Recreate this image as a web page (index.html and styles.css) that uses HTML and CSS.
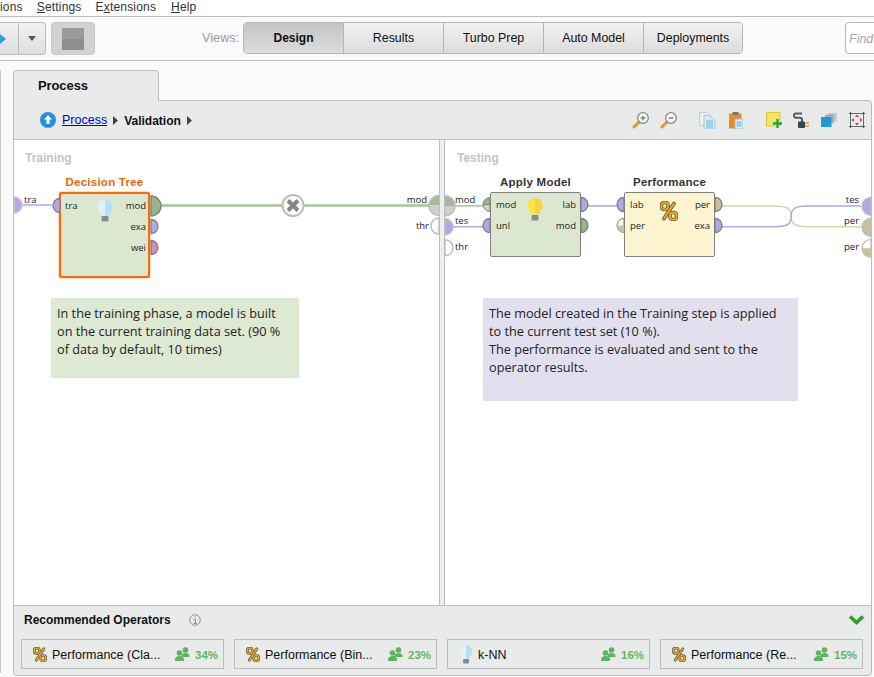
FILE: index.html
```html
<!DOCTYPE html>
<html lang="en">
<head>
<meta charset="utf-8">
<title>Process - Validation</title>
<link rel="stylesheet" href="styles.css">
</head>
<body>
<svg class="defs" width="0" height="0" aria-hidden="true">
  <defs>
    <symbol id="pct" viewBox="0 0 18 20">
      <path d="M14 2.500 4 17.500" fill="none" stroke="#5d5a4c" stroke-width="3.800" stroke-linecap="round"/>
      <rect x="1.500" y="1.500" width="6.500" height="7" rx="2.600" fill="none" stroke="#5d5a4c" stroke-width="3.600"/>
      <rect x="10" y="11.500" width="6.500" height="7" rx="2.600" fill="none" stroke="#5d5a4c" stroke-width="3.600"/>
      <path d="M14 2.500 4 17.500" fill="none" stroke="#f2a91c" stroke-width="2" stroke-linecap="round"/>
      <rect x="1.500" y="1.500" width="6.500" height="7" rx="2.600" fill="none" stroke="#f2a91c" stroke-width="1.800"/>
      <rect x="10" y="11.500" width="6.500" height="7" rx="2.600" fill="none" stroke="#f2a91c" stroke-width="1.800"/>
    </symbol>
    <symbol id="bulb-blue" viewBox="0 0 16 24">
      <path d="M8 1a7.500 7.500 0 0 0-7.500 7.500c0 3.500 2.800 5.500 3.500 9h4z" fill="#dff1fb"/>
      <path d="M8 1a7.500 7.500 0 0 1 7.500 7.500c0 3.500-2.800 5.500-3.500 9H8z" fill="#b5e0f6"/>
      <rect x="4.500" y="18" width="7" height="5.500" rx="1" fill="#78909c"/>
    </symbol>
    <symbol id="bulb-yellow" viewBox="0 0 16 24">
      <path d="M8 1a7.500 7.500 0 0 0-7.500 7.500c0 3.500 2.800 5.500 3.500 9h4z" fill="#fce34e"/>
      <path d="M8 1a7.500 7.500 0 0 1 7.500 7.500c0 3.500-2.800 5.500-3.500 9H8z" fill="#f8d33a"/>
      <rect x="4.500" y="18" width="7" height="5.500" rx="1" fill="#78909c"/>
    </symbol>
    <symbol id="people" viewBox="0 0 15 14">
      <circle cx="10.500" cy="3" r="2.800" fill="#5fb35f"/>
      <path d="M6.500 9c0-2 2-3 4-3s4 1 4 3v1h-8z" fill="#5fb35f"/>
      <circle cx="4.500" cy="6" r="2.800" fill="#5fb35f"/>
      <path d="M0 12.500c0-2 2-3.500 4.500-3.500S9 10.500 9 12.500V14H0z" fill="#5fb35f"/>
    </symbol>
    <symbol id="lens" viewBox="0 0 18 18">
      <path d="M7 11 2 16" stroke="#e8912d" stroke-width="3" stroke-linecap="round"/>
      <circle cx="11" cy="7" r="5.300" fill="#fff" stroke="#7c8a92" stroke-width="1.300"/>
    </symbol>
  </defs>
</svg>

<nav class="menubar">
  <span class="menu menu-cut">ions</span>
  <span class="menu"><u>S</u>ettings</span>
  <span class="menu">E<u>x</u>tensions</span>
  <span class="menu"><u>H</u>elp</span>
</nav>

<header class="toolbar">
  <div class="run-group">
    <span class="run-main"><svg class="run-arrow" width="8" height="12" viewBox="0 0 8 12"><path d="M0 1h1l6 5-6 5H0z" fill="#2c9fdc"/></svg></span>
    <span class="run-drop"><svg width="8" height="5" viewBox="0 0 8 5"><path d="M0 0h8L4 5z" fill="#555"/></svg></span>
  </div>
  <div class="stop-btn"><span class="stop-square"></span></div>
  <span class="views-label">Views:</span>
  <div class="views">
    <span class="view view-active">Design</span>
    <span class="view">Results</span>
    <span class="view">Turbo Prep</span>
    <span class="view">Auto Model</span>
    <span class="view">Deployments</span>
  </div>
  <div class="find">Find</div>
</header>

<main class="workspace">
  <div class="side-edge"></div>
  <section class="process">
    <div class="tab">Process</div>
    <div class="panel">
      <div class="crumbs">
        <svg class="up" width="16" height="16" viewBox="0 0 16 16"><circle cx="8" cy="8" r="8" fill="#2491d6"/><path d="M8 3 12 7.500H9.500V12h-3V7.500H4z" fill="#fff"/></svg>
        <a class="crumb-link" href="#">Process</a>
        <svg class="tri" width="5" height="9" viewBox="0 0 5 9"><path d="M0 0 5 4.500 0 9z" fill="#444"/></svg>
        <b class="crumb-now">Validation</b>
        <svg class="tri" width="5" height="9" viewBox="0 0 5 9"><path d="M0 0 5 4.500 0 9z" fill="#444"/></svg>
        <div class="tools">
          <svg class="tool t-zi" width="18" height="18" viewBox="0 0 18 18"><use href="#lens"/><path d="M8.500 7h5M11 4.500v5" stroke="#5b9a3c" stroke-width="1.400"/></svg>
          <svg class="tool t-zo" width="18" height="18" viewBox="0 0 18 18"><use href="#lens"/><path d="M8.500 7h5" stroke="#cf4a3a" stroke-width="1.400"/></svg>
          <svg class="tool t-copy" width="17" height="17" viewBox="0 0 17 17"><path d="M.5.500h7l2 2v11h-9z" fill="#eef1f3" stroke="#c3ccd1"/><path d="M5 3.500h6l5 4.500v9H5z" fill="#d6ebf8" stroke="#9ccae6"/><path d="M7 9h7M7 11h7M7 13h7M7 15h7" stroke="#6fb3dc"/></svg>
          <svg class="tool t-paste" width="14" height="17" viewBox="0 0 14 17"><rect x="0" y="1.500" width="12.500" height="15" fill="#f28a1e"/><rect x="3.500" y="0" width="6" height="3" fill="#6a7a84"/><rect x="6" y="7" width="8" height="10" fill="#e3f1fa" stroke="#8fc0de"/><path d="M7.500 10h5M7.500 12h5M7.500 14h5" stroke="#5aa5d4"/></svg>
          <svg class="tool t-note" width="16" height="16" viewBox="0 0 16 16"><rect x=".5" y=".5" width="13.500" height="13.500" fill="#f7e45e" stroke="#e3c63d"/><path d="M11.500 7v9M7 11.500h9" stroke="#1fa457" stroke-width="2.400"/></svg>
          <svg class="tool t-plug" width="16" height="16" viewBox="0 0 16 16"><path d="M9 1.500H2.800Q1 1.500 1 3.500T3 5.800h3.500Q9 5.800 9 7.500V10" fill="none" stroke="#4d5c64" stroke-width="2"/><rect x="5" y="9.500" width="7" height="6.500" rx="1" fill="#37474f"/><path d="M12 11h4M12 14h4" stroke="#e8a02d" stroke-width="1.600"/></svg>
          <svg class="tool t-layer" width="16" height="14" viewBox="0 0 16 14"><rect x="7" y="0" width="9" height="8.500" fill="#c4cacd"/><rect x="4" y="1.700" width="9" height="8.500" fill="#a4adb2"/><rect x="0" y="4" width="10.500" height="10" fill="#1f97dd"/></svg>
          <svg class="tool t-fit" width="16" height="16" viewBox="0 0 16 16"><rect x="1.500" y="1.500" width="13" height="13" fill="none" stroke="#5f6f78"/><path d="M0 1.500h3M1.500 0v3M13 1.500h3M14.500 0v3M0 14.500h3M1.500 13v3M13 14.500h3M14.500 13v3" stroke="#4b5a63"/><path d="M8 2.500 10 5H6zM8 13.500 6 11h4zM2.500 8 5 6v4zM13.500 8 11 10V6z" fill="#d2442c"/></svg>
        </div>
      </div>

      <div class="canvases">
        <div class="pane pane-left">
          <div class="pane-title">Training</div>
          <svg class="wires" viewBox="14 140 425 465">
            <path d="M22 205H52" class="w-purple"/>
            <path d="M160 205.500H430" class="w-green"/>
            <path d="M14 197a8 8 0 0 1 0 16z" fill="#b4a7e6" stroke="#c9c9c9" stroke-width="1.500"/>
            <text class="pl" x="24" y="203">tra</text>
            <text class="pl" x="427" y="203" text-anchor="end">mod</text>
            <text class="pl" x="429" y="229" text-anchor="end">thr</text>
            <path d="M439 195.500a10 10 0 0 0-10 10h10z" fill="#a3bc97"/>
            <path d="M429 205.500a10 10 0 0 0 10 10v-10z" fill="#cfcfcf"/>
            <path d="M439 195.500a10 10 0 0 0 0 20" fill="none" stroke="#bdbdbd" stroke-width="1.500"/>
            <path d="M439 218a8 8 0 0 0 0 16z" fill="#fff" stroke="#bdbdbd" stroke-width="1.500"/>
            <circle cx="293" cy="205.500" r="10.500" fill="#fff" stroke="#bdbdbd" stroke-width="2"/>
            <path d="M288 200.500l10 10M298 200.500l-10 10" stroke="#858585" stroke-width="4"/>
          </svg>

          <article class="op op-selected op-tall op-dt">
            <h3 class="op-title">Decision Tree</h3>
            <svg class="op-icon" width="16" height="24"><use href="#bulb-blue"/></svg>
            <span class="plabel pi">tra</span>
            <span class="plabel po r0">mod</span>
            <span class="plabel po r1">exa</span>
            <span class="plabel po r2">wei</span>
            <svg class="ports" width="114" height="90" viewBox="0 0 114 90">
              <path d="M11 5.500a7 7 0 0 0 0 14z" fill="#b4a7e6" stroke="#7f7f7f" stroke-width="1.300"/>
              <path d="M102 3a10 10 0 0 1 0 20z" fill="#97b588" stroke="#7f7f7f" stroke-width="1.300"/>
              <path d="M102 26.500a7 7 0 0 1 0 14z" fill="#b4a7e6" stroke="#7f7f7f" stroke-width="1.300"/>
              <path d="M102 47.500a7 7 0 0 1 0 14z" fill="#cf90b8" stroke="#7f7f7f" stroke-width="1.300"/>
            </svg>
          </article>

          <p class="note note-green">In the training phase, a model is built<br>on the current training data set. (90 %<br>of data by default, 10 times)</p>
        </div>

        <div class="divider"></div>

        <div class="pane pane-right">
          <div class="pane-title">Testing</div>
          <svg class="wires" viewBox="445 140 427 465">
            <path d="M453 205.500H484" class="w-thin-green"/>
            <path d="M452 226.500H484" class="w-purple"/>
            <path d="M588 205.500H618" class="w-purple"/>
            <path d="M722 205.500H775C790 205.500 792 209 792 216S795 226.500 808 226.500H862" class="w-tan"/>
            <path d="M722 226.500H775C790 226.500 792 223 792 216S795 205.500 808 205.500H862" class="w-purple"/>
            <path d="M445 195.500a10 10 0 0 1 10 10h-10z" fill="#a3bc97"/>
            <path d="M455 205.500a10 10 0 0 1-10 10v-10z" fill="#cfcfcf"/>
            <path d="M445 195.500a10 10 0 0 1 0 20" fill="none" stroke="#bdbdbd" stroke-width="1.500"/>
            <path d="M445 218.500a8 8 0 0 1 0 16z" fill="#b4a7e6" stroke="#bdbdbd" stroke-width="1.500"/>
            <path d="M445 239.500a8 8 0 0 1 0 16z" fill="#fff" stroke="#bdbdbd" stroke-width="1.500"/>
            <text class="pl" x="455" y="203">mod</text>
            <text class="pl" x="455" y="224">tes</text>
            <text class="pl" x="455" y="250">thr</text>
            <text class="pl" x="860" y="203" text-anchor="end">tes</text>
            <text class="pl" x="860" y="224" text-anchor="end">per</text>
            <text class="pl" x="860" y="250" text-anchor="end">per</text>
            <path d="M872 197a9 9 0 0 0 0 18z" fill="#b4a7e6" stroke="#bdbdbd" stroke-width="1.300"/>
            <path d="M872 218a9 9 0 0 0 0 18z" fill="#c8c19b" stroke="#bdbdbd" stroke-width="1.300"/>
            <path d="M872 239a9 9 0 0 0 0 18z" fill="#fff" stroke="#bdbdbd" stroke-width="1.300"/>
            <path d="M863 248a9 9 0 0 0 9 9v-9z" fill="#c8c19b"/>
          </svg>

          <article class="op op-am">
            <h3 class="op-title">Apply Model</h3>
            <svg class="op-icon" width="16" height="24"><use href="#bulb-yellow"/></svg>
            <span class="plabel pi r0">mod</span>
            <span class="plabel pi r1">unl</span>
            <span class="plabel po r0">lab</span>
            <span class="plabel po r1">mod</span>
            <svg class="ports" width="114" height="90" viewBox="0 0 114 90">
              <path d="M11 5.500a7 7 0 0 0-7 7h7z" fill="#97b588" stroke="#7f7f7f" stroke-width="1"/>
              <path d="M4 12.500a7 7 0 0 0 7 7v-7z" fill="#cfcfcf" stroke="#7f7f7f" stroke-width="1"/>
              <path d="M11 26.500a7 7 0 0 0 0 14z" fill="#b4a7e6" stroke="#7f7f7f" stroke-width="1.300"/>
              <path d="M102 5.500a7 7 0 0 1 0 14z" fill="#b4a7e6" stroke="#7f7f7f" stroke-width="1.300"/>
              <path d="M102 26.500a7 7 0 0 1 0 14z" fill="#97b588" stroke="#7f7f7f" stroke-width="1.300"/>
            </svg>
          </article>

          <article class="op op-perf">
            <h3 class="op-title">Performance</h3>
            <svg class="op-icon op-icon-pct" width="18" height="20"><use href="#pct"/></svg>
            <span class="plabel pi r0">lab</span>
            <span class="plabel pi r1">per</span>
            <span class="plabel po r0">per</span>
            <span class="plabel po r1">exa</span>
            <svg class="ports" width="114" height="90" viewBox="0 0 114 90">
              <path d="M11 5.500a7 7 0 0 0 0 14z" fill="#b4a7e6" stroke="#7f7f7f" stroke-width="1.300"/>
              <path d="M11 26.500a7 7 0 0 0 0 14z" fill="#fff" stroke="#7f7f7f" stroke-width="1"/>
              <path d="M4 33.500a7 7 0 0 0 7 7v-7z" fill="#c8c19b"/>
              <path d="M102 5.500a7 7 0 0 1 0 14z" fill="#c8c19b" stroke="#7f7f7f" stroke-width="1.300"/>
              <path d="M102 26.500a7 7 0 0 1 0 14z" fill="#b4a7e6" stroke="#7f7f7f" stroke-width="1.300"/>
            </svg>
          </article>

          <p class="note note-purple">The model created in the Training step is applied<br>to the current test set (10 %).<br>The performance is evaluated and sent to the<br>operator results.</p>
        </div>
      </div>

      <footer class="recs">
        <div class="recs-head">
          <strong class="recs-title">Recommended Operators</strong>
          <svg class="info" width="12" height="12" viewBox="0 0 12 12"><circle cx="6" cy="6" r="5.300" fill="none" stroke="#8e8e8e"/><path d="M6 2.500v1.500M4.500 5.500H6.500V9.500M4.500 9.500H8" fill="none" stroke="#8e8e8e"/></svg>
          <svg class="chev" width="17" height="11" viewBox="0 0 17 11"><path d="M2 2.500 8.500 8.500 15 2.500" fill="none" stroke="#2ba02b" stroke-width="3.600"/></svg>
        </div>
        <div class="rec-grid">
          <div class="rec"><svg class="rec-icon" width="14" height="15"><use href="#pct"/></svg><span class="rec-name">Performance (Cla...</span><svg class="rec-people" width="15" height="14"><use href="#people"/></svg><b class="rec-pct">34%</b></div>
          <div class="rec"><svg class="rec-icon" width="14" height="15"><use href="#pct"/></svg><span class="rec-name">Performance (Bin...</span><svg class="rec-people" width="15" height="14"><use href="#people"/></svg><b class="rec-pct">23%</b></div>
          <div class="rec"><svg class="rec-icon" width="14" height="20"><use href="#bulb-blue"/></svg><span class="rec-name">k-NN</span><svg class="rec-people" width="15" height="14"><use href="#people"/></svg><b class="rec-pct">16%</b></div>
          <div class="rec"><svg class="rec-icon" width="14" height="15"><use href="#pct"/></svg><span class="rec-name">Performance (Re...</span><svg class="rec-people" width="15" height="14"><use href="#people"/></svg><b class="rec-pct">15%</b></div>
        </div>
      </footer>
    </div>
  </section>
</main>
</body>
</html>
```
FILE: styles.css
```css
* { box-sizing: border-box; }
html, body { margin: 0; height: 100%; overflow: hidden; }
body { width: 874px; height: 677px; background: #fafafa; font-family: "Liberation Sans", Arial, sans-serif; color: #111; display: flex; flex-direction: column; }
.defs { position: absolute; }

.menubar { height: 17px; background: #fff; border-bottom: 1px solid #bdbdbd; display: flex; font-size: 12px; line-height: 14px; color: #333; letter-spacing: .18px; flex: none; }
.menu { margin-right: 14px; white-space: nowrap; }
.menu:nth-child(3) { margin-right: 15px; }

.toolbar { height: 44px; flex: none; display: flex; align-items: flex-start; padding-top: 5px; background: #fafafa; border-bottom: 1px solid #bdbdbd; }
.run-group { width: 46px; height: 33px; flex: none; display: flex; border: 1px solid #bdbdbd; border-left: 0; border-radius: 0 4px 4px 0; background: linear-gradient(#f2f2f2, #dedede); }
.run-main { width: 19px; border-right: 1px solid #bdbdbd; display: flex; align-items: center; }
.run-arrow { margin-left: -1px; }
.run-drop { flex: 1; display: flex; align-items: center; justify-content: center; }
.stop-btn { width: 44px; height: 33px; flex: none; margin-left: 5px; background: #d2d2d2; border: 1px solid #c8c8c8; border-radius: 4px; display: flex; align-items: center; justify-content: center; }
.stop-square { width: 22px; height: 22px; background: linear-gradient(#9a9a9a 50%, #8e8e8e 50%); }
.views-label { margin-left: 107px; width: 41px; flex: none; line-height: 33px; font-size: 12.5px; color: #999; letter-spacing: .1px; }
.views { width: 500px; height: 32px; flex: none; display: flex; border: 1px solid #b5b5b5; border-radius: 4px; overflow: hidden; }
.view { width: 100px; flex: none; display: flex; align-items: center; justify-content: center; font-size: 12.400px; padding-bottom: 1px; background: linear-gradient(#f2f2f2, #dcdcdc); border-left: 1px solid #b5b5b5; color: #111; }
.view:first-child { width: 99px; border-left: 0; }
.view:last-child { width: 99px; }
.view-active { font-weight: 700; font-size: 12px; background: linear-gradient(#c4c4c4, #dcdcdc); }
.find { width: 40px; height: 32px; margin-left: 102px; flex: none; background: #fff; border: 1px solid #b5b5b5; border-radius: 4px 0 0 4px; padding-left: 3px; line-height: 32px; font-size: 12.500px; font-style: italic; color: #a5a5a5; }

.workspace { flex: 1; display: flex; min-height: 0; padding: 9px 0 1px; background: #fafafa; }
.side-edge { width: 1px; background: #c9c9c9; flex: none; margin-bottom: 3px; }
.process { margin-left: 12px; width: 859px; display: flex; flex-direction: column; }
.tab { width: 146px; height: 31px; flex: none; margin-bottom: -1px; position: relative; z-index: 1; padding-left: 24px; line-height: 30px; font-size: 13px; font-weight: 700; background: #e9eaea; border: 1px solid #bdbdbd; border-bottom: 0; border-radius: 4px 4px 0 0; letter-spacing: -.1px; }
.panel { flex: 1; display: flex; flex-direction: column; min-height: 0; background: #e9eaea; border: 1px solid #bdbdbd; border-radius: 0 4px 4px 4px; }

.crumbs { height: 39px; flex: none; display: flex; align-items: center; padding-left: 26px; border-bottom: 1px solid #bdbdbd; }
.up { flex: none; margin-right: 6px; }
.crumb-link { color: #0000ee; font-size: 12.500px; }
.tri { margin: 0 6px; flex: none; }
.crumb-now { font-size: 12px; color: #111; padding-top: 2px; }
.tools { margin-left: auto; display: flex; align-items: center; padding-right: 6px; }
.tool { flex: none; }
.t-zi { margin-right: 10px; }
.t-zo { margin-right: 21px; }
.t-copy { margin-right: 13px; }
.t-paste { margin-right: 23px; }
.t-note { margin-right: 11px; }
.t-plug { margin-right: 12px; }
.t-layer { margin-right: 12px; }

.canvases { flex: 1; min-height: 0; display: flex; }
.divider { width: 6px; flex: none; background: #eeeeee; border-left: 1px solid #bdbdbd; border-right: 1px solid #bdbdbd; }
.pane { position: relative; background: #fff; overflow: hidden; }
.pane-left { width: 425px; flex: none; }
.pane-right { flex: 1; }
.pane-title { position: absolute; left: 11px; top: 11px; font-size: 12px; font-weight: 700; color: #c4c4c4; }
.pane-right .pane-title { left: 12px; }
.wires { position: absolute; left: 0; top: 0; width: 100%; height: 100%; }
.w-purple { fill: none; stroke: #b4a7e6; stroke-width: 1.500; }
.w-green { fill: none; stroke: #a3c696; stroke-width: 2.500; }
.w-thin-green { fill: none; stroke: #a3c696; stroke-width: 1.500; }
.w-tan { fill: none; stroke: #d9d2ac; stroke-width: 1.500; }
.pl { font-family: "Open Sans", sans-serif; font-size: 9.500px; fill: #222; }

.op { position: absolute; top: 52px; width: 91px; height: 65px; border: 1.500px solid #808080; border-radius: 2px; background: #dbe8cf; }
.op-tall { height: 86px; }
.op-selected { border: 2px solid #ff6a00; box-shadow: 0 0 1px 1px rgba(255, 150, 70, .3); }
.op-dt { left: 45px; }
.op-am { left: 45px; }
.op-perf { left: 179px; background: #fdf5d0; }
.op-title { position: absolute; left: -30px; right: -30px; top: -18px; margin: 0; text-align: center; font-size: 11.500px; line-height: 14px; font-weight: 700; color: #333; letter-spacing: .25px; white-space: nowrap; }
.op-selected .op-title { color: #f76300; top: -19px; }
.op-icon { position: absolute; left: 36px; top: 4px; }
.op-icon-pct { left: 35px; top: 8px; }
.plabel { position: absolute; font-family: "Open Sans", sans-serif; font-size: 9.500px; line-height: 12px; color: #222; top: 6px; }
.pi { left: 5px; }
.po { right: 4px; }
.op-dt .po { right: 2px; }
.op-dt .pi { left: 4px; }
.r1 { top: 27px; }
.r2 { top: 48px; }
.ports { position: absolute; left: -12px; top: -1px; overflow: visible; pointer-events: none; }

.note { position: absolute; top: 158px; margin: 0; padding: 6px; font-family: "Open Sans", sans-serif; font-size: 12.700px; line-height: 18px; color: #222; white-space: nowrap; }
.note-green { left: 37px; width: 248px; height: 80px; background: #dde9d2; }
.note-purple { left: 38px; width: 315px; height: 103px; background: #e2e0ee; }

.recs { height: 70px; flex: none; border-top: 1px solid #bdbdbd; padding: 0 8px 0 7px; display: flex; flex-direction: column; }
.recs-head { height: 33px; flex: none; display: flex; align-items: center; padding: 0 0 6px 3px; }
.recs-title { font-size: 12px; }
.info { margin-left: 18px; flex: none; }
.chev { margin-left: auto; margin-right: -2px; }
.rec-grid { display: grid; grid-template-columns: repeat(4, 1fr); gap: 10px; }
.rec { height: 30px; display: flex; align-items: center; border: 1px solid #bdbdbd; padding: 0 5px 0 11px; font-size: 12.500px; color: #111; white-space: nowrap; }
.rec-icon { flex: none; margin-right: 5px; }
.rec-name { flex: 1; min-width: 0; padding-top: 1px; }
.rec-people { flex: none; margin-right: 5px; }
.rec-pct { font-size: 11.500px; color: #5fb85f; width: 23px; padding-top: 1px; }
```
